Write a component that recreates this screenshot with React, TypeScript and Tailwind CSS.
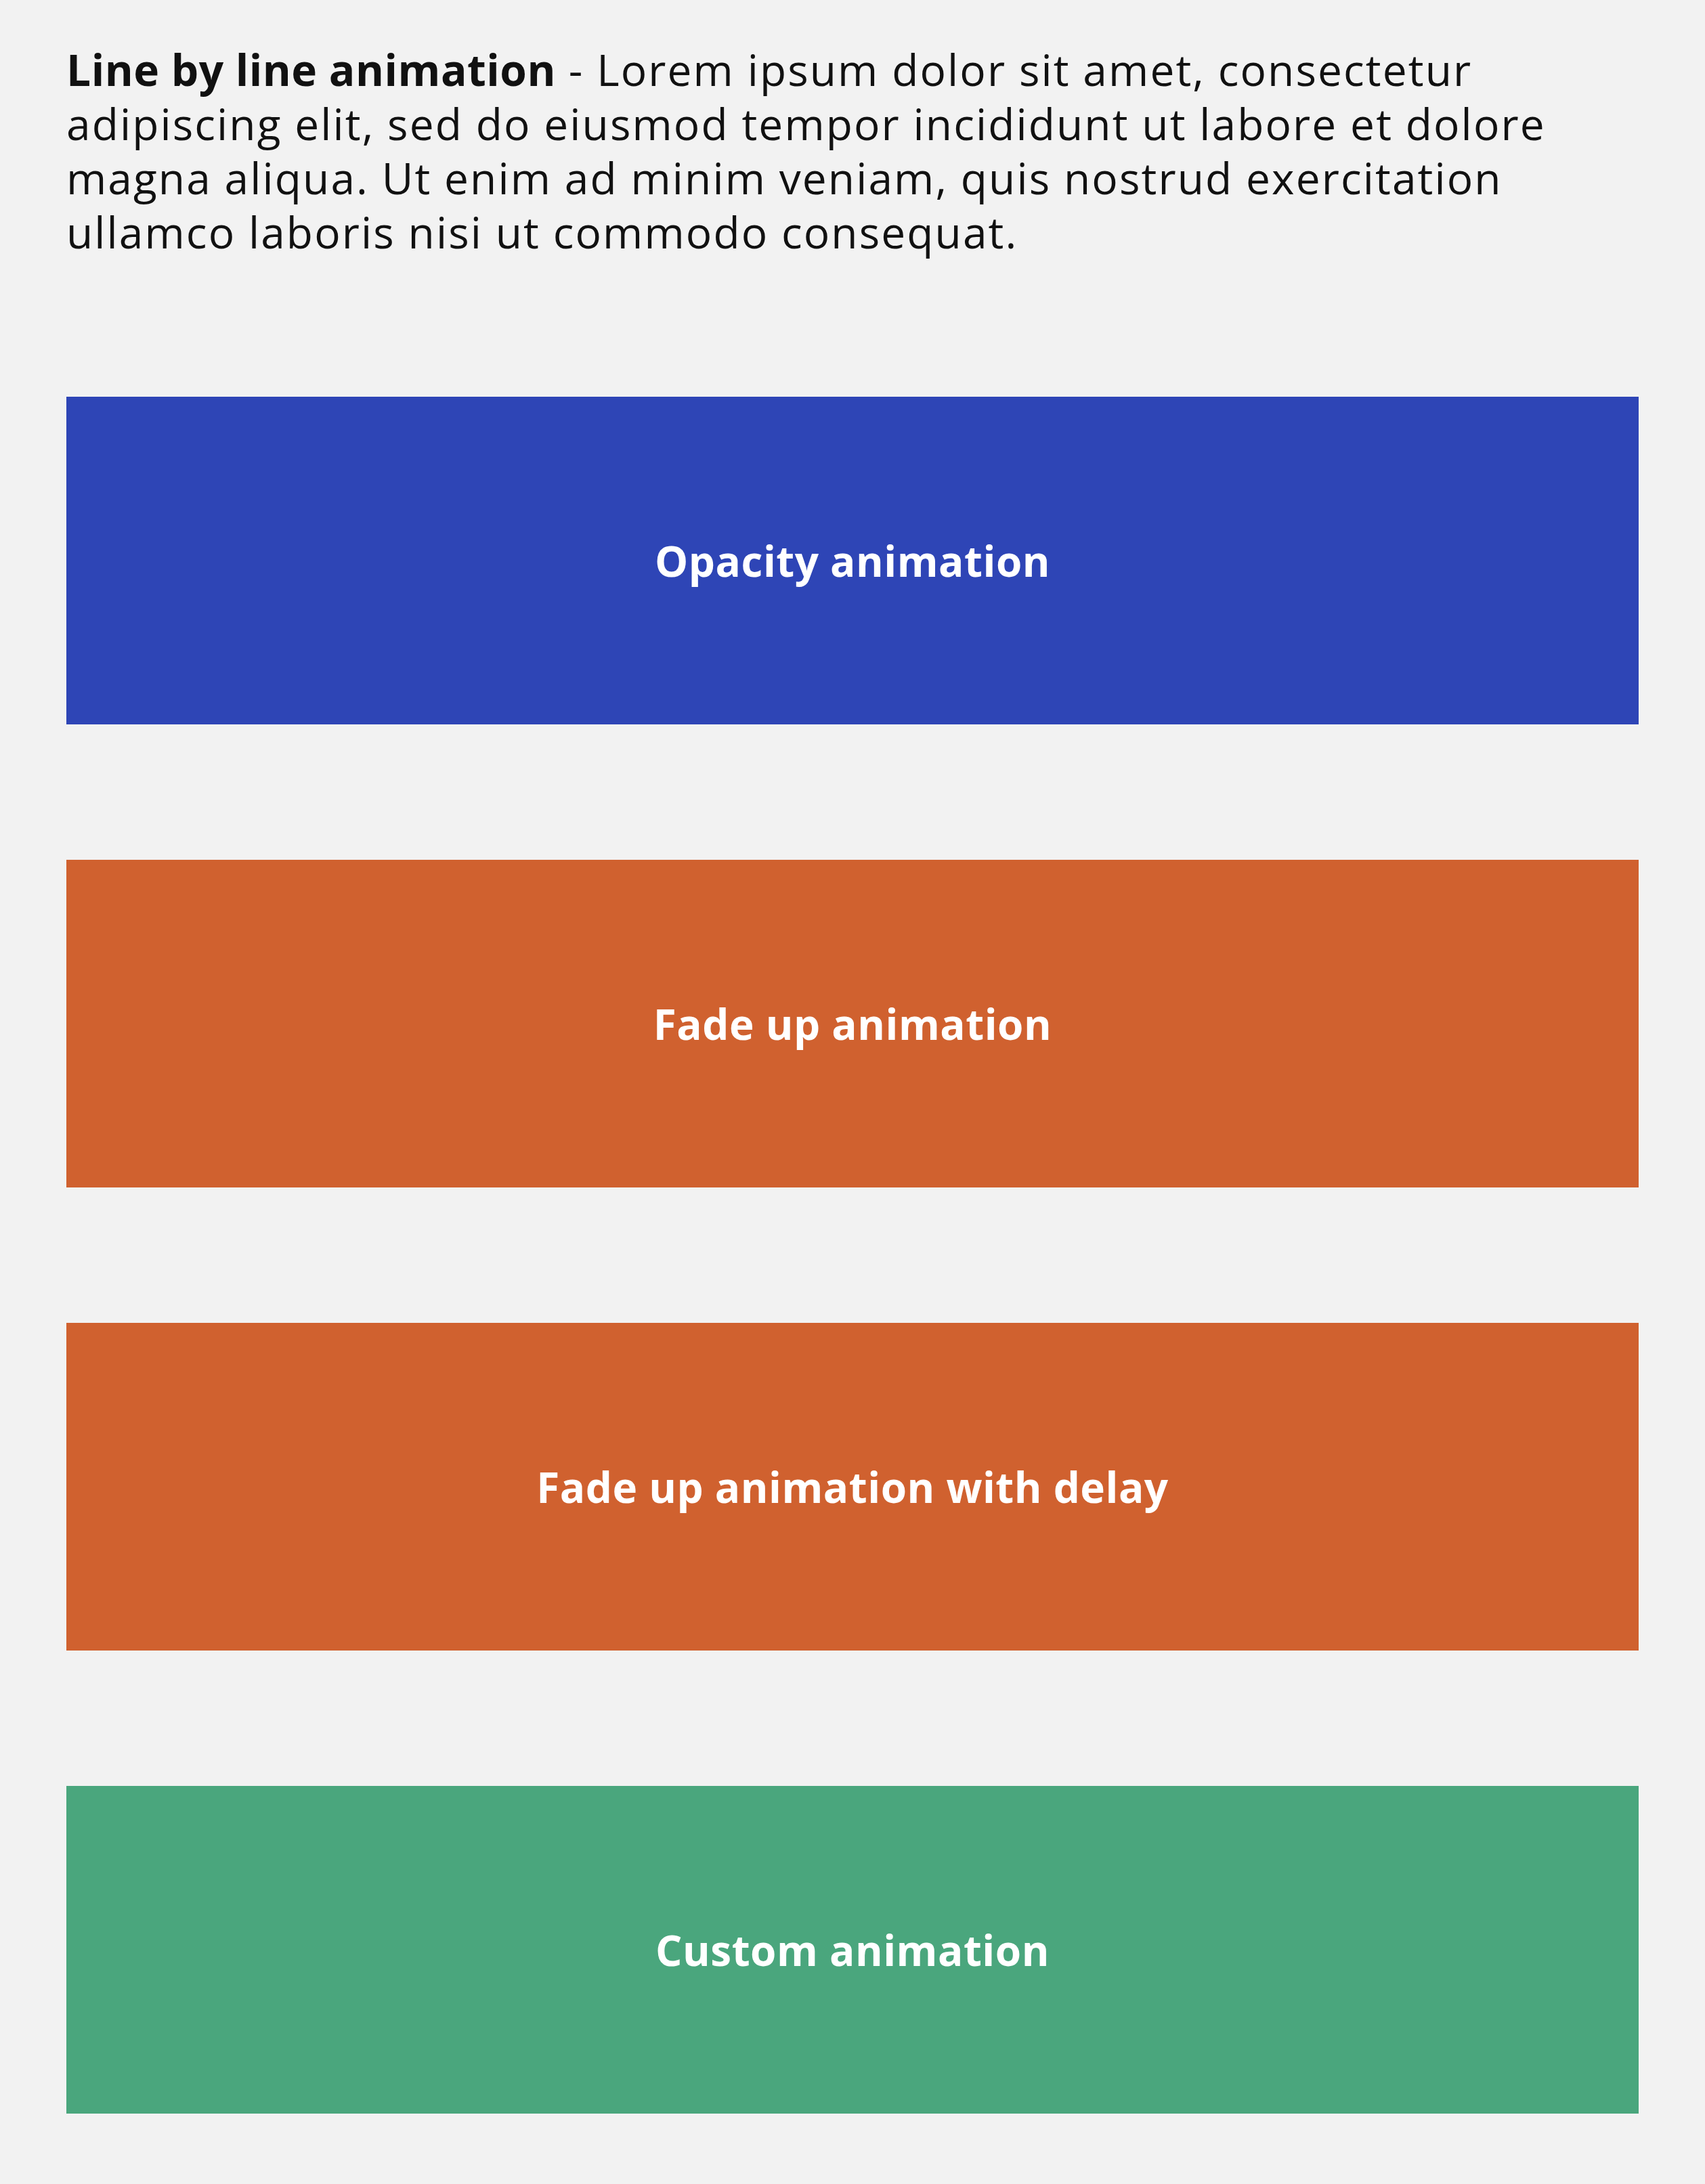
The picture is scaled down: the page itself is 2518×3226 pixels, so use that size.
import React from 'react';

const boxes = [
  { label: 'Opacity animation', color: 'bg-[#2e45b6]' },
  { label: 'Fade up animation', color: 'bg-[#d0612f]' },
  { label: 'Fade up animation with delay', color: 'bg-[#d0612f]' },
  { label: 'Custom animation', color: 'bg-[#4aa67d]' },
];

const App = () => {
  return (
    <div className="min-h-screen bg-[#f2f2f2] px-[98px] pt-[63px] pb-[104px] font-['Open_Sans',sans-serif] text-[#111111]">
      <p className="text-[64px] leading-[80px] tracking-[2.1px]">
        <strong className="font-bold tracking-[0.5px]">Line by line animation</strong> - Lorem ipsum dolor sit amet,
        consectetur adipiscing elit, sed do eiusmod tempor incididunt ut labore et dolore magna aliqua. Ut enim ad
        minim veniam, quis nostrud exercitation ullamco laboris nisi ut commodo consequat.
      </p>

      <div className="mt-[203px] flex flex-col gap-[200px]">
        {boxes.map((box) => (
          <div key={box.label} className={`${box.color} flex h-[484px] items-center justify-center`}>
            <span className="text-[62px] font-bold tracking-[0.5px] text-white">{box.label}</span>
          </div>
        ))}
      </div>
    </div>
  );
};

export default App;
